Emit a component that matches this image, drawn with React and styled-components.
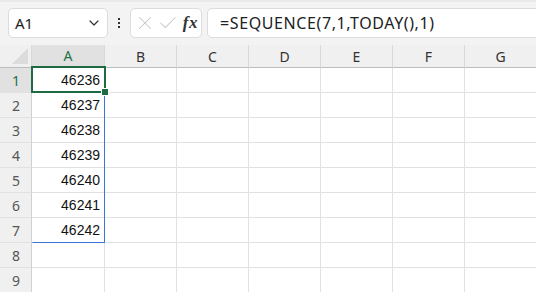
import React from 'react';
import styled, { createGlobalStyle } from 'styled-components';
import { ChevronDown, X, Check } from 'lucide-react';

const GlobalStyle = createGlobalStyle`
  body {
    margin: 0;
    background: #f3f3f3;
    font-family: "Noto Sans", "Liberation Sans", sans-serif;
    overflow: hidden;
  }
`;

const Page = styled.div`
  width: 536px;
  height: 292px;
  overflow: hidden;
  background: #f3f3f3;
`;

const Toolbar = styled.div`
  display: flex;
  align-items: center;
  height: 45px;
  padding: 7px 0 8px 8px;
  box-sizing: border-box;
  border-top: 2px solid #e9e9e9;
  overflow: hidden;
`;

const Box = styled.div`
  display: flex;
  align-items: center;
  height: 30px;
  box-sizing: border-box;
  background: #fff;
  border: 1px solid #dcdcdc;
  border-radius: 5px;
  flex-shrink: 0;
`;

const NameBox = styled(Box)`
  width: 100px;
  padding: 0 5px 0 6px;
  justify-content: space-between;
  font-size: 15px;
  color: #222;
`;

const Dots = styled.div`
  width: 22px;
  flex-shrink: 0;
  display: flex;
  flex-direction: column;
  align-items: center;
  gap: 2px;
  span {
    width: 2px;
    height: 2px;
    background: #333;
  }
`;

const FxBox = styled(Box)`
  width: 72px;
  padding: 0 3px 0 3px;
  gap: 1px;
  color: #c8c8c8;
`;

const Fx = styled.span`
  margin-left: auto;
  font-family: "Liberation Serif", serif;
  font-style: italic;
  font-weight: bold;
  font-size: 17px;
  color: #333;
  letter-spacing: 0.5px;
`;

const FormulaBox = styled(Box)`
  margin-left: 5px;
  width: 360px;
  padding-left: 12px;
  font-size: 16px;
  letter-spacing: 0.6px;
  color: #222;
  border-radius: 5px 0 0 5px;
`;

const Sheet = styled.div`
  position: relative;
  display: grid;
  grid-template-columns: 32px 73px repeat(6, 72px);
  grid-template-rows: 23px repeat(9, 25px);
  background: #fff;
`;

const Corner = styled.div`
  background: #f0f0f0;
  border-bottom: 1px solid #bdbdbd;
  border-right: 1px solid #d8d8d8;
  box-sizing: border-box;
  position: relative;
  &::after {
    content: '';
    position: absolute;
    right: 3px;
    bottom: 3px;
    width: 0;
    height: 0;
    border-left: 16px solid transparent;
    border-bottom: 16px solid #dcdcdc;
  }
`;

const ColHead = styled.div`
  display: flex;
  align-items: center;
  justify-content: center;
  box-sizing: border-box;
  font-size: 14px;
  background: ${p => (p.$active ? '#e1e1e1' : '#f0f0f0')};
  color: ${p => (p.$active ? '#217346' : '#333')};
  border-right: 1px solid #d8d8d8;
  border-bottom: ${p => (p.$active ? '2px solid #217346' : '1px solid #bdbdbd')};
`;

const RowHead = styled.div`
  display: flex;
  align-items: center;
  padding-left: 12px;
  box-sizing: border-box;
  font-size: 14px;
  background: ${p => (p.$active ? '#e1e1e1' : '#f0f0f0')};
  color: ${p => (p.$active ? '#217346' : '#555')};
  border-right: 1px solid #d0d0d0;
  border-bottom: 1px solid #e1e1e1;
`;

const Cell = styled.div`
  display: flex;
  align-items: center;
  justify-content: flex-end;
  padding-right: 4px;
  box-sizing: border-box;
  font-family: "Liberation Sans", sans-serif;
  font-size: 14px;
  color: #111;
  border-right: 1px solid #e1e1e1;
  border-bottom: 1px solid #e1e1e1;
`;

const Spill = styled.div`
  position: absolute;
  left: 32px;
  top: 22px;
  width: 73px;
  height: 176px;
  border: 1px solid #3a75d4;
  border-left-color: transparent;
  box-sizing: border-box;
  pointer-events: none;
`;

const Selection = styled.div`
  position: absolute;
  left: 31px;
  top: 21px;
  width: 75px;
  height: 27px;
  border: 2px solid #1e6b41;
  box-sizing: border-box;
  pointer-events: none;
`;

const Handle = styled.div`
  position: absolute;
  left: 102px;
  top: 44px;
  width: 6px;
  height: 6px;
  background: #1e6b41;
  border: 1px solid #fff;
  box-sizing: content-box;
  margin: -1px;
`;

const cols = ['A', 'B', 'C', 'D', 'E', 'F', 'G'];
const values = [46236, 46237, 46238, 46239, 46240, 46241, 46242];

export default function App() {
  return (
    <Page>
      <GlobalStyle />
      <Toolbar>
        <NameBox>
          <span>A1</span>
          <ChevronDown size={16} strokeWidth={1.8} color="#333" />
        </NameBox>
        <Dots>
          <span />
          <span />
          <span />
        </Dots>
        <FxBox>
          <X size={22} strokeWidth={1.1} />
          <Check size={22} strokeWidth={1.1} />
          <Fx>fx</Fx>
        </FxBox>
        <FormulaBox>=SEQUENCE(7,1,TODAY(),1)</FormulaBox>
      </Toolbar>
      <Sheet>
        <Corner />
        {cols.map(c => (
          <ColHead key={c} $active={c === 'A'}>{c}</ColHead>
        ))}
        {Array.from({ length: 9 }, (_, r) => (
          <React.Fragment key={r}>
            <RowHead $active={r === 0}>{r + 1}</RowHead>
            {cols.map((c, ci) => (
              <Cell key={c}>{ci === 0 && values[r] ? values[r] : ''}</Cell>
            ))}
          </React.Fragment>
        ))}
        <Spill />
        <Selection />
        <Handle />
      </Sheet>
    </Page>
  );
}
